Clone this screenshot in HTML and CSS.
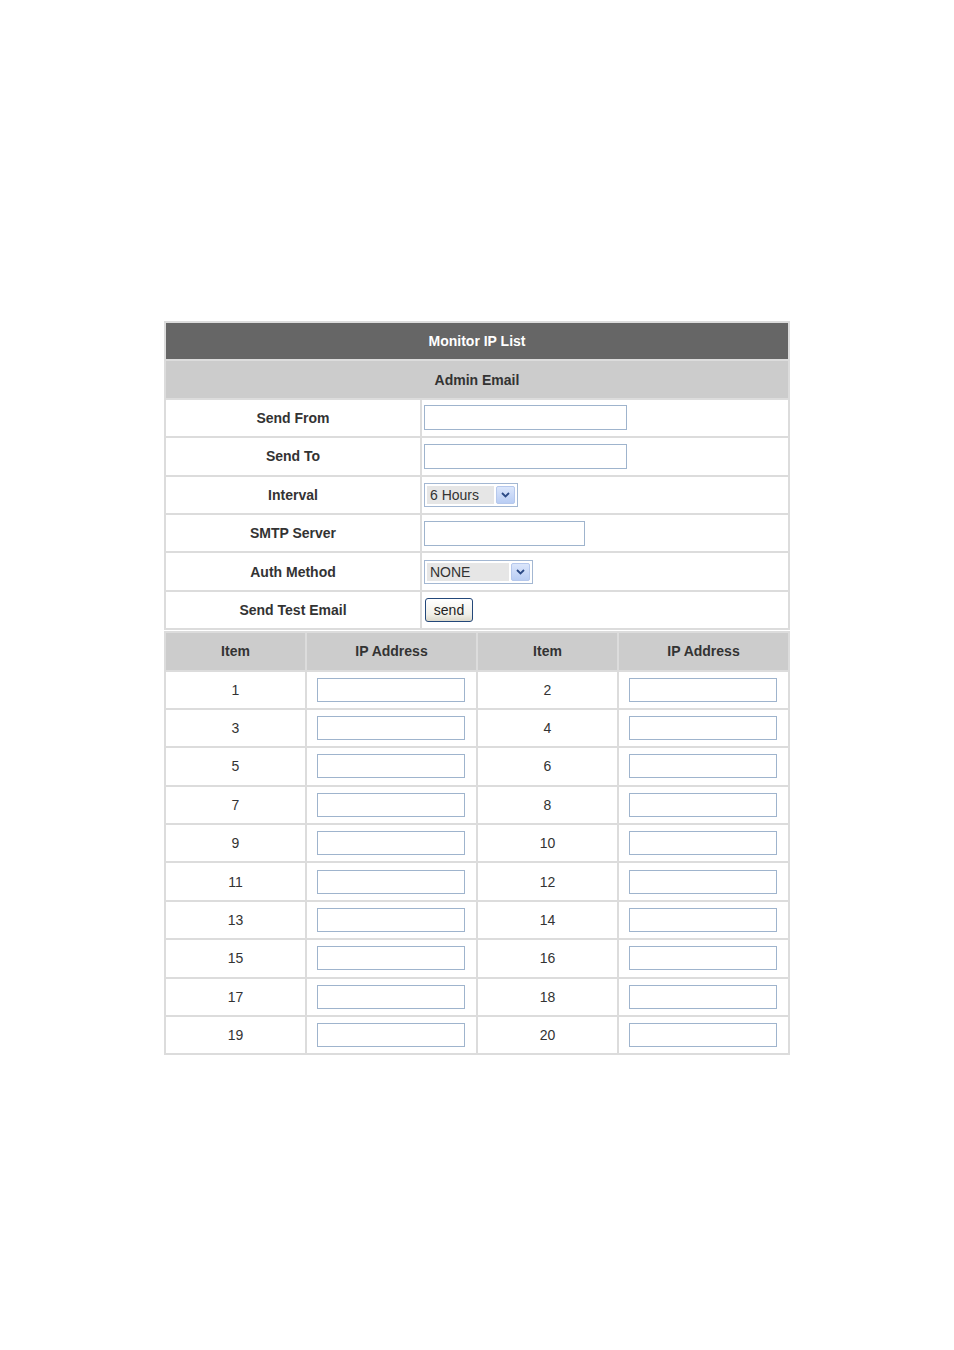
FILE: index.html
```html
<!DOCTYPE html>
<html lang="en">
<head>
    <meta charset="UTF-8">
    <title>Monitor IP List</title>
    <link rel="stylesheet" href="styles.css">
</head>
<body>
    <div class="page">
        <table class="grid setup">
            <tr><th colspan="2" class="title">Monitor IP List</th></tr>
            <tr><th colspan="2" class="section">Admin Email</th></tr>
            <tr>
                <td class="label">Send From</td>
                <td class="value"><input type="text" class="field wide"></td>
            </tr>
            <tr>
                <td class="label">Send To</td>
                <td class="value"><input type="text" class="field wide"></td>
            </tr>
            <tr>
                <td class="label">Interval</td>
                <td class="value">
                    <div class="select interval">
                        <span class="select-text">6 Hours</span>
                        <span class="select-btn"><svg width="9" height="6" viewBox="0 0 9 6"><path d="M1 1 L4.5 4.5 L8 1" fill="none" stroke="#2c4a86" stroke-width="1.8"/></svg></span>
                    </div>
                </td>
            </tr>
            <tr>
                <td class="label">SMTP Server</td>
                <td class="value"><input type="text" class="field mid"></td>
            </tr>
            <tr>
                <td class="label">Auth Method</td>
                <td class="value">
                    <div class="select auth">
                        <span class="select-text">NONE</span>
                        <span class="select-btn"><svg width="9" height="6" viewBox="0 0 9 6"><path d="M1 1 L4.5 4.5 L8 1" fill="none" stroke="#2c4a86" stroke-width="1.8"/></svg></span>
                    </div>
                </td>
            </tr>
            <tr>
                <td class="label">Send Test Email</td>
                <td class="value"><button class="btn">send</button></td>
            </tr>
        </table>

        <table class="grid iplist">
            <tr>
                <th class="section col-item">Item</th>
                <th class="section col-ip">IP Address</th>
                <th class="section col-item">Item</th>
                <th class="section col-ip">IP Address</th>
            </tr>
            <tr><td>1</td><td><input type="text" class="field ip"></td><td>2</td><td><input type="text" class="field ip"></td></tr>
            <tr><td>3</td><td><input type="text" class="field ip"></td><td>4</td><td><input type="text" class="field ip"></td></tr>
            <tr><td>5</td><td><input type="text" class="field ip"></td><td>6</td><td><input type="text" class="field ip"></td></tr>
            <tr><td>7</td><td><input type="text" class="field ip"></td><td>8</td><td><input type="text" class="field ip"></td></tr>
            <tr><td>9</td><td><input type="text" class="field ip"></td><td>10</td><td><input type="text" class="field ip"></td></tr>
            <tr><td>11</td><td><input type="text" class="field ip"></td><td>12</td><td><input type="text" class="field ip"></td></tr>
            <tr><td>13</td><td><input type="text" class="field ip"></td><td>14</td><td><input type="text" class="field ip"></td></tr>
            <tr><td>15</td><td><input type="text" class="field ip"></td><td>16</td><td><input type="text" class="field ip"></td></tr>
            <tr><td>17</td><td><input type="text" class="field ip"></td><td>18</td><td><input type="text" class="field ip"></td></tr>
            <tr><td>19</td><td><input type="text" class="field ip"></td><td>20</td><td><input type="text" class="field ip"></td></tr>
        </table>
    </div>
</body>
</html>
```

FILE: styles.css
```css
body {
    margin: 0;
    background-color: #fff;
    font-family: "Liberation Sans", Arial, sans-serif;
    font-size: 14px;
    color: #333;
}
.page {
    padding: 321px 0 0 164px;
}
.grid {
    width: 626px;
    border-collapse: collapse;
    border: 2px solid #dcdcdc;
}
.grid th,
.grid td {
    border: 2px solid #dcdcdc;
    height: 36.4px;
    padding: 0;
    text-align: center;
}
.setup {
    margin-bottom: 1px;
}
.title {
    background-color: #666;
    color: #fff;
    font-weight: bold;
}
.section {
    background-color: #ccc;
    color: #333;
    font-weight: bold;
}
.label {
    width: 254px;
    font-weight: bold;
}
.setup .value {
    text-align: left;
    padding-left: 2px;
}
.field {
    display: block;
    box-sizing: border-box;
    height: 25px;
    margin: 0;
    border: 1px solid #9fb4cd;
    background-color: #fff;
    font-family: inherit;
    font-size: 14px;
}
.wide {
    width: 203px;
}
.mid {
    width: 161px;
}
.ip {
    width: 148px;
    height: 24px;
    margin: 0 auto;
    position: relative;
    left: -1px;
}
.col-item {
    width: 139px;
}
.select {
    display: flex;
    box-sizing: border-box;
    height: 24px;
    padding: 2px;
    border: 1px solid #a3b7d2;
    background-color: #fff;
}
.interval {
    width: 94px;
}
.auth {
    width: 109px;
}
.select-text {
    flex: 1;
    background-color: #e6e6e6;
    color: #333;
    line-height: 18px;
    padding-left: 3px;
}
.select-btn {
    display: flex;
    align-items: center;
    justify-content: center;
    width: 17px;
    margin-left: 2px;
    border: 1px solid #b6c8ec;
    border-radius: 2px;
    background: linear-gradient(#dbe6fb, #b9cdf4);
}
.btn {
    display: block;
    box-sizing: border-box;
    width: 48px;
    height: 24px;
    margin-left: 1px;
    padding: 0;
    border: 1px solid #24487a;
    border-radius: 3px;
    background: linear-gradient(#fff, #f0efe8 70%, #dcd9cc);
    color: #222;
    font-family: inherit;
    font-size: 14px;
}
```
